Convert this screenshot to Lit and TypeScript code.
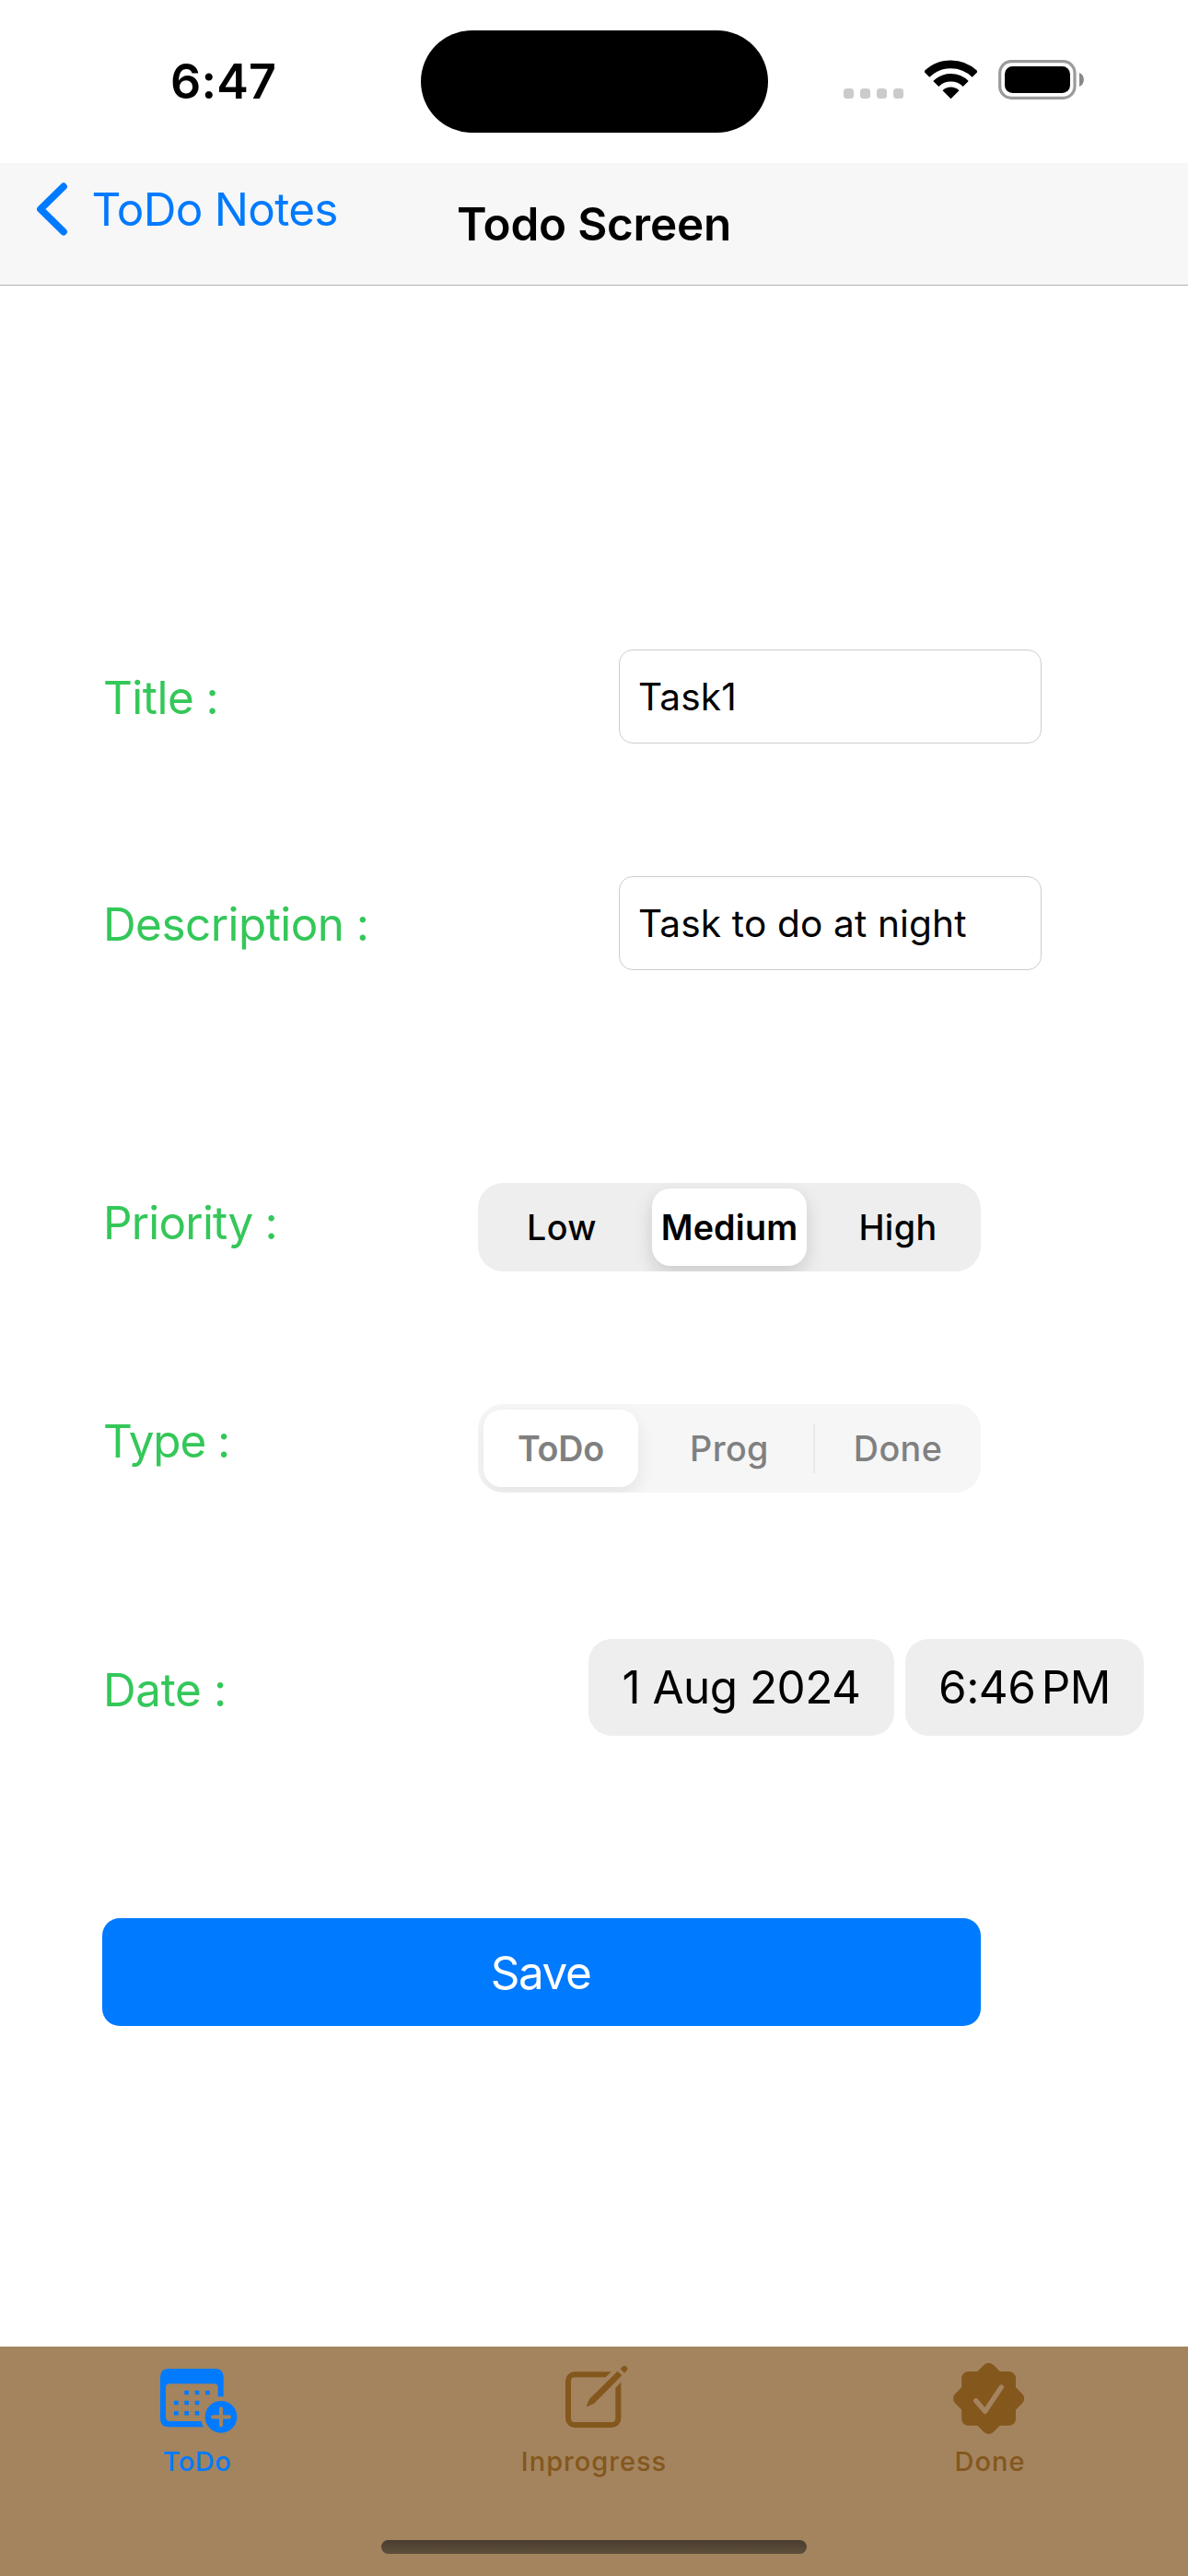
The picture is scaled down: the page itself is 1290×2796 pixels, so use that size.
import { LitElement, html, css, nothing } from "lit";
import { customElement, property, state } from "lit/decorators.js";
import { classMap } from "lit/directives/class-map.js";

const font = css`Inter, "Liberation Sans", sans-serif`;

@customElement("status-bar")
class StatusBar extends LitElement {
  static styles = css`
    :host { display: grid; grid-template-columns: 456.5px 377px 1fr; align-items: center; height: 177px; background: #fff; font-family: ${font}; }
    .time { padding-left: 185px; font-size: 52px; font-weight: 600; line-height: 60px; letter-spacing: 0.18px; }
    .island { height: 111px; border-radius: 56px; background: #000; }
    .signals { display: flex; align-items: center; padding-left: 82.5px; margin-top: -4px; }
    .dots { display: flex; gap: 7px; margin-top: 30px; }
    .dot { width: 11px; height: 11px; border-radius: 3.5px; background: #cbcbcb; }
    .wifi { display: block; width: 57px; height: 43px; margin-left: 23px; }
    .battery { display: block; width: 93px; height: 43px; margin-left: 23px; }
  `;
  render() {
    return html`
      <div class="time">6:47</div>
      <div class="island"></div>
      <div class="signals">
        <div class="dots">${[0, 1, 2, 3].map(() => html`<span class="dot"></span>`)}</div>
        <svg class="wifi" viewBox="0 0 57 43" fill="none" stroke="#000">
          <path d="M2.2 15.7a37.2 37.2 0 0 1 52.6 0" stroke-width="8.8" />
          <path d="M12.3 26a22.8 22.8 0 0 1 32.4 0" stroke-width="8.5" />
          <path d="M28.5 42.3L19.5 33.2a13 13 0 0 1 18 0z" fill="#000" stroke="none" />
        </svg>
        <svg class="battery" viewBox="0 0 93 43">
          <rect x="1.7" y="1.7" width="81.3" height="39.6" rx="12.5" fill="none" stroke="#9a9a9a" stroke-width="3.2" />
          <rect x="7" y="7" width="71" height="29" rx="8.5" />
          <path d="M88 14c6.5 2.6 6.500 12.400 0 15z" fill="#888" />
        </svg>
      </div>
    `;
  }
}

@customElement("nav-bar")
class NavBar extends LitElement {
  static styles = css`
    :host { display: grid; grid-template-columns: 1fr auto 1fr; height: 132px; border-bottom: 1px solid #b2b2b2; background: #f7f7f7; font-family: ${font}; font-size: 49.4px; }
    .back { display: flex; align-items: center; align-self: start; height: 100px; padding-left: 39px; color: #007aff; letter-spacing: -0.7px; white-space: nowrap; }
    .chevron { display: block; width: 36px; height: 60px; margin-right: 24.5px; }
    .title { align-self: center; font-weight: 600; letter-spacing: -0.22px; line-height: 60px; white-space: nowrap; }
  `;
  render() {
    return html`
      <div class="back">
        <svg class="chevron" viewBox="0 0 36 60" fill="none" stroke="#007aff" stroke-width="7.8" stroke-linecap="round" stroke-linejoin="round">
          <path d="M30 5.5L5 30L30 54.500" />
        </svg>
        <span>ToDo Notes</span>
      </div>
      <div class="title">Todo Screen</div>
    `;
  }
}

@customElement("segmented-control")
class SegmentedControl extends LitElement {
  @property({ type: Array }) options: string[] = [];
  @property({ type: Number }) selected = 0;
  @property({ type: Boolean, reflect: true }) disabled = false;

  static styles = css`
    :host { display: grid; grid-template-columns: repeat(3, 1fr); width: 546px; height: 96px; border-radius: 27px; background: #eee; overflow: hidden; font-family: ${font}; font-size: 37.7px; color: #000; }
    :host([disabled]) { background: #f6f6f6; color: #808080; }
    .option { display: flex; align-items: center; justify-content: center; font-weight: 450; letter-spacing: 0.4px; cursor: default; }
    .option:last-child { padding-left: 2px; }
    .selected { margin: 6px 7px; border-radius: 20px; background: #fff; font-weight: 600; letter-spacing: 0.2px; box-shadow: 0 8px 20px rgba(0, 0, 0, 0.15); }
    .selected:first-child { margin: 6px 8px 6px 6px; letter-spacing: -0.2px; }
    :host([disabled]) .selected { box-shadow: 0 8px 20px rgba(0, 0, 0, 0.075); }
    .divided { background: linear-gradient(#e9e9e9, #e9e9e9) left center / 2px 54px no-repeat; }
  `;
  private pick(i: number) {
    if (!this.disabled) this.selected = i;
  }
  render() {
    return this.options.map((label, i) => {
      const classes = {
        option: true,
        selected: i === this.selected,
        divided: i > 0 && i !== this.selected && i - 1 !== this.selected,
      };
      return html`<div class=${classMap(classes)} @click=${() => this.pick(i)}>${label}</div>`;
    });
  }
}

@customElement("tab-bar")
class TabBar extends LitElement {
  @state() private active = 0;

  static styles = css`
    :host { display: flex; flex-direction: column; justify-content: space-between; align-items: center; box-sizing: border-box; height: 249px; padding: 17px 0 24px; background: #a3845e; font-family: ${font}; }
    .tabs { display: grid; grid-template-columns: repeat(3, 1fr); width: 100%; }
    .tab { display: flex; flex-direction: column; align-items: center; gap: 10px; color: #84571d; font-size: 29px; font-weight: 500; line-height: 35px; letter-spacing: 1px; }
    .active { color: #007aff; letter-spacing: 0.5px; }
    .active span { padding-right: 2px; }
    .icon { display: block; height: 80px; }
    .home { width: 462px; height: 15px; border-radius: 8px; background: linear-gradient(#493d2f, #5f4f3c); }
  `;
  private calendar = html`
    <svg class="icon" width="86" viewBox="126 102 258 240">
      <mask id="calendar-cut" maskUnits="userSpaceOnUse" x="120" y="100" width="270" height="245">
        <rect x="120" y="100" width="270" height="245" fill="#fff" />
        <circle cx="330" cy="280" r="66" fill="#000" />
        <path d="M310 215h40v20h-40z" fill="#000" />
      </mask>
      <g fill="currentColor">
        <path mask="url(#calendar-cut)" fill-rule="evenodd" d="M160 123H311Q338 123 338 151V285Q338 313 311 313H160Q132 313 132 285V151Q132 123 160 123ZM163 172Q150 172 150 185V280Q150 294 164 294H306Q320 294 320 280V185Q320 172 307 172Z" />
        ${[[218, 201], [252, 201], [286, 201], [184, 234], [218, 234], [252, 234], [184, 268], [218, 268], [252, 268]].map(([x, y]) => this.dot(x, y))}
        <circle cx="330" cy="280" r="52" />
      </g>
      <path d="M330 253v54M303 280h54" stroke="#a3845e" stroke-width="12.500" stroke-linecap="round" />
    </svg>`;
  private compose = html`
    <svg class="icon" width="80" viewBox="195 102 240 240">
      <mask id="compose-cut" maskUnits="userSpaceOnUse" x="195" y="100" width="240" height="245">
        <rect x="195" y="100" width="240" height="245" fill="#fff" />
        <path d="M280 257L440 97" stroke="#000" stroke-width="47" />
      </mask>
      <rect mask="url(#compose-cut)" x="231" y="142" width="163" height="164" rx="21" fill="none" stroke="currentColor" stroke-width="18" />
      <g fill="currentColor">
        <path d="M392 131L406 145L317 235Q315 237 312 238L294 246Q289 247 291 242L299 225Q300 222 302 220Z" />
        <path d="M401 124L407 117Q414 110 421 117Q428 124 421 130L414 137Z" />
      </g>
    </svg>`;
  private seal = html`
    <svg class="icon" width="80" viewBox="165 102 240 240">
      <g fill="currentColor">
        <rect x="192.500" y="132" width="176.500" height="176.500" rx="22" />
        <rect x="192.500" y="132" width="176.500" height="176.500" rx="22" transform="rotate(45 280.750 220.250)" />
      </g>
      <path d="M239 227L269 262L322 183" fill="none" stroke="#a3845e" stroke-width="16" stroke-linecap="round" stroke-linejoin="round" />
    </svg>`;
  private dot(x: number, y: number) {
    return html`<svg x=${x - 7.5} y=${y - 7.5} width="15" height="15" viewBox="0 0 15 15"><rect width="15" height="15" rx="2.500" fill="currentColor" /></svg>`;
  }
  render() {
    const tabs = [
      { label: "ToDo", icon: this.calendar },
      { label: "Inprogress", icon: this.compose },
      { label: "Done", icon: this.seal },
    ];
    return html`
      <div class="tabs">
        ${tabs.map((t, i) => html`
          <div class=${classMap({ tab: true, active: i === this.active })} @click=${() => (this.active = i)}>
            ${t.icon ?? nothing}<span>${t.label}</span>
          </div>`)}
      </div>
      <div class="home"></div>
    `;
  }
}

@customElement("app-root")
class AppRoot extends LitElement {
  static styles = css`
    :host { display: flex; flex-direction: column; width: 1290px; height: 2796px; background: #fff; color: #000; font-family: ${font}; }
    .form { flex: 1; box-sizing: border-box; padding: 395px 48px 0 111px; }
    .row { display: flex; align-items: flex-start; justify-content: space-between; }
    .label { padding-left: 1px; color: #34c759; font-size: 49.4px; letter-spacing: -0.52px; white-space: nowrap; font-feature-settings: "calt" 0; }
    .title { height: 102px; padding-right: 111px; }
    .title .label { line-height: 105px; }
    .description { height: 102px; margin-top: 144px; padding-right: 111px; }
    .description .label { line-height: 104px; }
    .priority { height: 96px; margin-top: 231px; padding-right: 177px; }
    .priority .label { line-height: 87px; letter-spacing: -0.79px; }
    .type { height: 96px; margin-top: 144px; padding-right: 177px; }
    .type .label { line-height: 80px; letter-spacing: -1.1px; }
    .date { height: 105px; margin-top: 159px; }
    .date .label { line-height: 110px; letter-spacing: -0.35px; }
    .field { box-sizing: border-box; width: 459px; height: 102px; margin: 0; padding: 0 20px; border: 1px solid #cdcdcd; border-radius: 15px; background: #fff; color: #000; font-family: ${font}; font-size: 40.6px; letter-spacing: 0.15px; outline: none; }
    .pills { display: flex; gap: 12px; }
    .pill { display: flex; align-items: center; justify-content: center; box-sizing: border-box; height: 105px; padding-bottom: 2px; border-radius: 25px; background: #eee; font-size: 49.4px; letter-spacing: -0.5px; white-space: nowrap; }
    .day { width: 332px; }
    .clock { width: 259px; word-spacing: -7px; }
    .save { display: block; width: 954px; height: 117px; margin: 198px 0 0; padding: 0 2px 0 0; border: 0; border-radius: 19px; background: #007aff; color: #fff; font-family: ${font}; font-size: 49.4px; letter-spacing: -1.4px; }
  `;
  render() {
    return html`
      <status-bar></status-bar>
      <nav-bar></nav-bar>
      <div class="form">
        <div class="row title">
          <span class="label">Title :</span>
          <input class="field" .value=${"Task1"} />
        </div>
        <div class="row description">
          <span class="label">Description :</span>
          <input class="field" .value=${"Task to do at night"} />
        </div>
        <div class="row priority">
          <span class="label">Priority :</span>
          <segmented-control .options=${["Low", "Medium", "High"]} .selected=${1}></segmented-control>
        </div>
        <div class="row type">
          <span class="label">Type :</span>
          <segmented-control disabled .options=${["ToDo", "Prog", "Done"]} .selected=${0}></segmented-control>
        </div>
        <div class="row date">
          <span class="label">Date :</span>
          <div class="pills">
            <div class="pill day">1 Aug 2024</div>
            <div class="pill clock">6:46 PM</div>
          </div>
        </div>
        <button class="save">Save</button>
      </div>
      <tab-bar></tab-bar>
    `;
  }
}
